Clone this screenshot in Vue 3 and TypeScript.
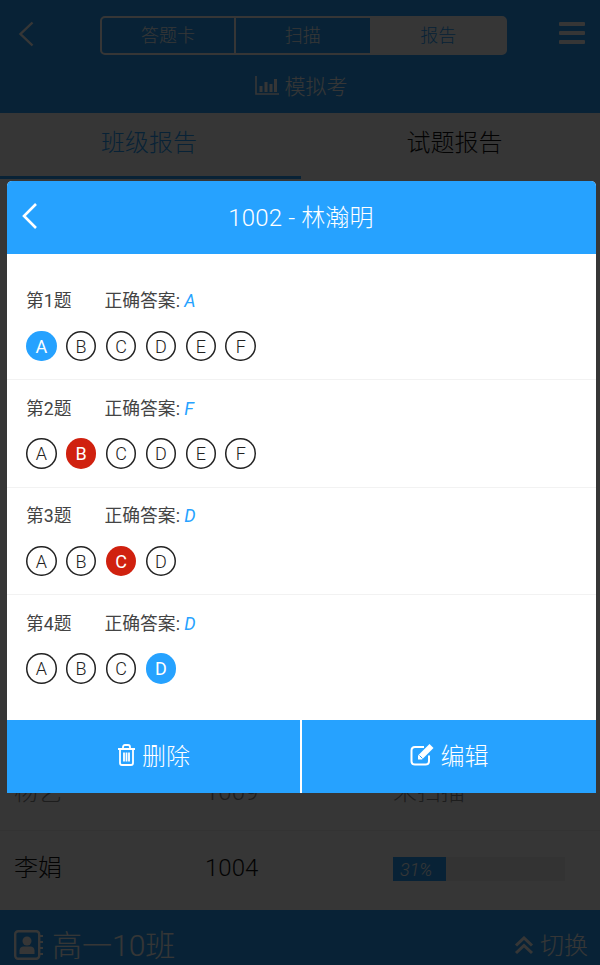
<script setup lang="ts">
interface Question { no: number; answer: string; options: string[]; picked: string; wrong: boolean }
const questions: Question[] = [
  { no: 1, answer: 'A', options: ['A', 'B', 'C', 'D', 'E', 'F'], picked: 'A', wrong: false },
  { no: 2, answer: 'F', options: ['A', 'B', 'C', 'D', 'E', 'F'], picked: 'B', wrong: true },
  { no: 3, answer: 'D', options: ['A', 'B', 'C', 'D'], picked: 'C', wrong: true },
  { no: 4, answer: 'D', options: ['A', 'B', 'C', 'D'], picked: 'D', wrong: false },
]
</script>

<template>
  <div class="page">
    <header class="top">
      <div class="nav">
        <svg class="back" width="16" height="26" viewBox="0 0 16 26"><path d="M14.500 1.500 2.500 13l12 11.500" fill="none" stroke="#fff" stroke-width="2.400" /></svg>
        <div class="seg">
          <span class="seg-item first">答题卡</span>
          <span class="seg-item">扫描</span>
          <span class="seg-item on">报告</span>
        </div>
        <div class="menu"><i></i><i></i><i></i></div>
      </div>
      <div class="exam">
        <svg width="24" height="19" viewBox="0 0 24 19"><path d="M1 0v18h23" fill="none" stroke="#fff" stroke-width="1.600" /><path d="M4.500 10h3v6h-3zM9.500 6h3v10h-3zM14.500 8h3v8h-3zM19 3h3v13h-3z" fill="#fff" /></svg>
        <span>模拟考</span>
      </div>
    </header>
    <nav class="tabs">
      <div class="tab active">班级报告</div>
      <div class="tab">试题报告</div>
    </nav>
    <section class="list">
      <div class="row">
        <span>杨艺</span><span>1009</span><span>未扫描</span>
      </div>
      <div class="row">
        <span>李娟</span><span>1004</span>
        <div class="bar"><div class="fill">31%</div></div>
      </div>
    </section>
    <footer class="bottom">
      <div class="klass">
        <svg width="29" height="30" viewBox="0 0 29 30"><rect x="1.200" y="1.200" width="24" height="27.600" rx="3" fill="none" stroke="#fff" stroke-width="2.400" /><path d="M26 6h3M26 12h3M26 18h3M26 24h3" stroke="#fff" stroke-width="2" /><circle cx="13" cy="11" r="4.500" fill="#fff" /><path d="M5.500 24v-3.500c0-2.500 2-4 4-4h7c2 0 4 1.500 4 4V24z" fill="#fff" /></svg>
        <span>高一10班</span>
      </div>
      <div class="switch">
        <svg width="20" height="19" viewBox="0 0 20 19"><path d="M2 9.500 10 2l8 7.500M2 17l8-7.500 8 7.500" fill="none" stroke="#fff" stroke-width="3" /></svg>
        <span>切换</span>
      </div>
    </footer>

    <div class="overlay"></div>

    <div class="modal">
      <div class="m-head">
        <svg class="m-back" width="16" height="26" viewBox="0 0 16 26"><path d="M15 1 3 13l12 12" fill="none" stroke="#fff" stroke-width="2.600" /></svg>
        <span class="m-title">1002 - 林瀚明</span>
      </div>
      <div class="m-body">
        <div v-for="q in questions" :key="q.no" class="q">
          <div class="q-title">
            <span class="q-no">第{{ q.no }}题</span>
            <span>正确答案: <em>{{ q.answer }}</em></span>
          </div>
          <div class="opts">
            <span
              v-for="o in q.options"
              :key="o"
              class="opt"
              :class="{ right: o === q.picked && !q.wrong, wrong: o === q.picked && q.wrong }"
            >{{ o }}</span>
          </div>
        </div>
      </div>
      <div class="m-foot">
        <button class="btn">
          <svg width="19" height="22" viewBox="0 0 19 22"><path d="M1 5h17M6 5V3c0-1 .7-2 2-2h3c1.300 0 2 1 2 2v2M3 5v14c0 1.200.8 2 2 2h9c1.200 0 2-.8 2-2V5M7 8.500v9M9.500 8.500v9M12 8.500v9" fill="none" stroke="#fff" stroke-width="1.800" /></svg>
          <span>删除</span>
        </button>
        <button class="btn">
          <svg width="25" height="23" viewBox="0 0 25 23"><path d="M19 12.500V18c0 2-1.500 3.500-3.500 3.500H5C3 21.500 1.500 20 1.500 18V7.500C1.500 5.500 3 4 5 4h9" fill="none" stroke="#fff" stroke-width="2" /><path d="M8 16.500v-4L19.500 1l4 4L12 16.500z" fill="#fff" /><path d="M9.500 12.500l3 3" stroke="#26a2ff" stroke-width="1" /></svg>
          <span>编辑</span>
        </button>
      </div>
    </div>
  </div>
</template>

<style>
html, body { margin: 0; padding: 0; }
</style>

<style scoped>
.page {
  position: relative;
  width: 600px;
  height: 965px;
  overflow: hidden;
  display: flex;
  flex-direction: column;
  background: #fff;
  font-family: Roboto, "Noto Sans CJK SC", sans-serif;
  font-weight: 300;
}
.top {
  height: 113px;
  background: #26a2ff;
  color: #fff;
  display: flex;
  flex-direction: column;
  flex: none;
}
.nav {
  height: 70px;
  display: flex;
  align-items: flex-start;
  padding: 16px 15px 0 18px;
  box-sizing: border-box;
}
.back { margin-top: 5px; }
.seg {
  margin-left: 66px;
  width: 407px;
  height: 39px;
  box-sizing: border-box;
  border: 2px solid #fff;
  border-radius: 5px;
  display: flex;
}
.seg-item {
  flex: 1;
  font-size: 18px;
  line-height: 35px;
  text-align: center;
  border-right: 2px solid #fff;
}
.seg-item.first { flex: none; width: 134px; box-sizing: border-box; }
.seg-item.on { background: #fff; color: #26a2ff; border-right: 0; }
.menu {
  margin-left: auto;
  margin-top: 6px;
  width: 26px;
  display: flex;
  flex-direction: column;
  gap: 4.500px;
}
.menu i { display: block; height: 4.400px; background: #fff; border-radius: 1px; }
.exam {
  display: flex;
  justify-content: center;
  align-items: center;
  gap: 6px;
  font-size: 21px;
  height: 34px;
  margin-right: -2px;
  padding-bottom: 4px;
  box-sizing: border-box;
}
.tabs {
  flex: none;
  height: 67px;
  display: flex;
  box-sizing: border-box;
}
.tab {
  flex: none;
  width: 301px;
  font-size: 24px;
  line-height: 60px;
  text-align: center;
  color: #111;
  box-sizing: border-box;
  height: 67px;
}
.tab + .tab { width: 299px; padding-left: 8px; }
.tab.active { color: #26a2ff; border-bottom: 3px solid #26a2ff; height: 66px; padding-right: 3px; }
.list {
  flex: 1;
  display: flex;
  flex-direction: column;
  justify-content: flex-end;
  padding-bottom: 4px;
}
.row {
  flex: none;
  height: 75px;
  display: grid;
  grid-template-columns: 191px 188px 172px;
  align-items: center;
  padding-left: 14px;
  font-size: 24px;
  line-height: 30px;
  color: #111;
  border-bottom: 1px solid #eee;
  box-sizing: border-box;
}
.row span { margin-top: -2px; }
.row:last-child { border-bottom: 0; }
.row:first-child span { color: #888; }
.bar { height: 24px; background: #f0f0f0; width: 172px; }
.fill {
  width: 53px;
  height: 24px;
  background: #26a2ff;
  color: #fff;
  font-size: 18px;
  font-style: italic;
  line-height: 26px;
  padding-left: 7px;
  box-sizing: border-box;
}
.bottom {
  flex: none;
  height: 55px;
  background: #26a2ff;
  color: #fff;
  display: flex;
  justify-content: space-between;
  align-items: center;
  padding: 0 12px 0 14px;
}
.klass { display: flex; align-items: center; gap: 9px; font-size: 30px; padding-top: 15px; }
.klass span, .switch span { margin-top: -4px; }
.switch { display: flex; align-items: center; gap: 6px; font-size: 24px; padding-top: 15px; }
.overlay {
  position: absolute;
  inset: 0;
  background: rgba(0, 0, 0, 0.79);
}
.modal {
  position: absolute;
  left: 7px;
  top: 181px;
  width: 589px;
  height: 612px;
  background: #fff;
  border-radius: 5px 5px 0 0;
  overflow: hidden;
  display: flex;
  flex-direction: column;
}
.m-head {
  flex: none;
  height: 73px;
  box-sizing: border-box;
  padding-bottom: 4px;
  background: #26a2ff;
  color: #fff;
  font-size: 24px;
  display: flex;
  align-items: center;
  justify-content: center;
  position: relative;
}
.m-title { letter-spacing: 0.15px; margin-left: -1px; }
.m-back { position: absolute; left: 14px; top: 22px; }
.m-body { flex: 1; padding-top: 18.500px; box-sizing: border-box; }
.q {
  height: 107.500px;
  box-sizing: border-box;
  padding: 16.500px 0 0 19px;
  border-bottom: 1px solid #f2f2f2;
}
.q:last-child { border-bottom: 0; }
.q-title {
  display: flex;
  font-size: 17.800px;
  line-height: 24px;
  color: #444;
  font-weight: 400;
}
.q-no { width: 78.500px; flex: none; }
.q-title em { color: #26a2ff; font-style: italic; }
.opts { display: flex; gap: 9.400px; margin-top: 17.800px; }
.opt {
  width: 30.500px;
  height: 30.500px;
  box-sizing: border-box;
  box-shadow: inset 0 0 0 1.500px #222;
  border-radius: 50%;
  display: flex;
  align-items: center;
  justify-content: center;
  font-size: 18px;
  font-weight: 300;
  color: #222;
}
.opt.right { background: #26a2ff; box-shadow: none; color: #fff; font-weight: 400; }
.opt.wrong { background: #d0210f; box-shadow: none; color: #fff; font-weight: 400; }
.m-foot { flex: none; height: 73px; display: flex; gap: 2px; }
.btn {
  flex: 1;
  border: 0;
  padding: 0 0 4px;
  background: #26a2ff;
  color: #fff;
  font: inherit;
  font-size: 24px;
  display: flex;
  align-items: center;
  justify-content: center;
  gap: 6px;
}
.btn:first-child { flex: none; width: 293px; }
</style>
